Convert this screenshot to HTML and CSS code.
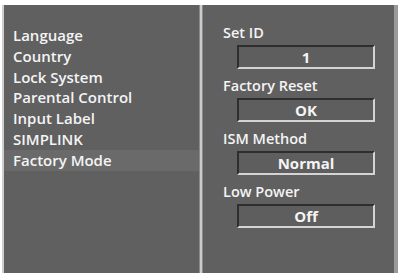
FILE: index.html
```html
<!DOCTYPE html>
<html>
<head>
<meta charset="utf-8">
<link rel="stylesheet" href="styles.css">
</head>
<body>
<div class="screen">
  <ul class="menu">
    <li>Language</li>
    <li>Country</li>
    <li>Lock System</li>
    <li>Parental Control</li>
    <li>Input Label</li>
    <li>SIMPLINK</li>
    <li class="active">Factory Mode</li>
  </ul>
  <div class="divider"></div>
  <div class="settings">
    <div class="field">
      <div class="label">Set ID</div>
      <div class="value">1</div>
    </div>
    <div class="field">
      <div class="label">Factory Reset</div>
      <div class="value">OK</div>
    </div>
    <div class="field">
      <div class="label">ISM Method</div>
      <div class="value">Normal</div>
    </div>
    <div class="field">
      <div class="label">Low Power</div>
      <div class="value">Off</div>
    </div>
  </div>
</div>
</body>
</html>
```
FILE: styles.css
```css
html, body {
  margin: 0;
  padding: 0;
  background: #ffffff;
}
body {
  width: 401px;
  height: 273px;
  overflow: hidden;
  font-family: "Open Sans", "Liberation Sans", sans-serif;
  font-weight: 600;
  color: #f4f4f4;
}
.screen {
  margin: 5px 0 0 2px;
  height: 268px;
  width: 396px;
  display: grid;
  grid-template-columns: 195px 4px 191px 4px;
  border-left: 2px solid #cfcfcf;
  box-sizing: border-box;
  background: #606060;
}
.screen::after {
  content: "";
  grid-column: 4;
  grid-row: 1;
  background: #9a9a9a;
}
.menu {
  list-style: none;
  margin: 0;
  padding: 20px 0 0 0;
  grid-column: 1;
  grid-row: 1;
}
.menu li {
  height: 20.8px;
  line-height: 20.8px;
  font-size: 15px;
  padding-left: 9px;
}
.menu li.active {
  background: #6a6a6a;
}
.divider {
  grid-column: 2;
  grid-row: 1;
  background: #cccccc;
  border-left: 1px solid #8a8a8a;
  border-right: 1px solid #8a8a8a;
}
.settings {
  grid-column: 3;
  grid-row: 1;
  padding: 19px 0 0 20px;
  display: flex;
  flex-direction: column;
}
.field {
  display: flex;
  flex-direction: column;
  margin-bottom: 8px;
}
.label {
  font-size: 14.5px;
  line-height: 18px;
  margin-bottom: 3px;
}
.value {
  margin-left: 14px;
  width: 138px;
  height: 24px;
  box-sizing: border-box;
  border-top: 2px solid #2e2e2e;
  border-left: 2px solid #2e2e2e;
  border-bottom: 2px solid #d4d4d4;
  border-right: 2px solid #d4d4d4;
  background: #5e5e5e;
  text-align: center;
  font-size: 15px;
  font-weight: 700;
  line-height: 20px;
}
```
